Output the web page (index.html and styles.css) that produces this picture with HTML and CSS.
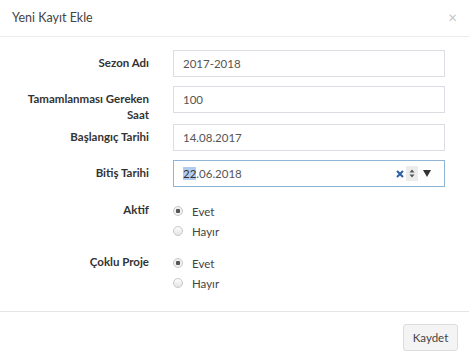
FILE: index.html
```html
<!DOCTYPE html>
<html lang="tr">
<head>
  <meta charset="UTF-8">
  <title>Yeni Kayıt Ekle</title>
  <link rel="stylesheet" href="styles.css">
</head>
<body>
  <div class="modal">
    <div class="modal-header">
      <h4 class="modal-title">Yeni Kayıt Ekle</h4>
      <span class="close">&times;</span>
    </div>

    <div class="modal-body">
      <div class="form-row">
        <label class="control-label">Sezon Adı</label>
        <div class="form-control">2017-2018</div>
      </div>
      <div class="form-row tight">
        <label class="control-label">Tamamlanması Gereken Saat</label>
        <div class="form-control">100</div>
      </div>
      <div class="form-row">
        <label class="control-label">Başlangıç Tarihi</label>
        <div class="form-control">14.08.2017</div>
      </div>
      <div class="form-row">
        <label class="control-label">Bitiş Tarihi</label>
        <div class="form-control focus">
          <span class="date-text"><span class="sel">22</span>.06.2018</span>
          <svg class="date-clear" width="8" height="8" viewBox="0 0 8 8">
            <path d="M1 1L7 7M7 1L1 7" stroke="#2c5ea8" stroke-width="2"/>
          </svg>
          <svg class="date-spin" width="12" height="15" viewBox="0 0 12 15">
            <rect width="12" height="15" fill="#ececec"/>
            <path d="M3.5 6.5L6 3.5L8.5 6.5Z M3.5 8.5L6 11.5L8.5 8.5Z" fill="#555"/>
          </svg>
          <svg class="date-drop" width="8" height="7" viewBox="0 0 8 7">
            <path d="M0 0H8L4 7Z" fill="#333"/>
          </svg>
        </div>
      </div>

      <div class="form-row radios first">
        <label class="control-label">Aktif</label>
        <div class="radio-group">
          <label class="radio"><input type="radio" name="aktif" checked> Evet</label>
          <label class="radio"><input type="radio" name="aktif"> Hayır</label>
        </div>
      </div>
      <div class="form-row radios">
        <label class="control-label">Çoklu Proje</label>
        <div class="radio-group">
          <label class="radio"><input type="radio" name="coklu" checked> Evet</label>
          <label class="radio"><input type="radio" name="coklu"> Hayır</label>
        </div>
      </div>
    </div>

    <div class="modal-footer">
      <button type="button" class="btn">Kaydet</button>
    </div>
  </div>
</body>
</html>
```

FILE: styles.css
```css
body {
  font-family: Lato, "Liberation Sans", sans-serif;
  margin: 0;
  padding: 0;
  background: #fff;
  color: #333;
}

.modal {
  width: 469px;
}

/* baslik */
.modal-header {
  height: 37px;
  border-bottom: 1px solid #ececec;
  display: flex;
  align-items: center;
  justify-content: space-between;
  padding: 0 11px 2px 12px;
  box-sizing: border-box;
}
.modal-title {
  margin: 0;
  font-size: 12.5px;
  font-weight: normal;
  color: #444;
}
.close {
  font-size: 15px;
  color: #c4c4c4;
  margin-right: 1px;
}

.modal-body {
  padding: 13px 0 0 8px;
  height: 274px;
  box-sizing: border-box;
}

.form-row {
  display: grid;
  grid-template-columns: 141px 272px;
  column-gap: 24px;
  margin-bottom: 9px;
}
.form-row.tight .control-label {
  margin-bottom: -8px;
}
.control-label {
  text-align: right;
  font-weight: bold;
  font-size: 11.5px;
  line-height: 16px;
  padding-top: 5px;
  color: #333;
}

.form-control {
  height: 27px;
  box-sizing: border-box;
  border: 1px solid #dcdde2;
  padding: 0 9px;
  font-size: 11.5px;
  line-height: 25px;
  color: #555;
  display: flex;
  align-items: center;
}
.form-control.focus {
  border-color: #8fb5d6;
}
.date-text {
  flex: 1;
}
.sel {
  background: #b0cdf0;
  color: #333;
}
.date-clear {
  margin-right: 2px;
}
.date-spin {
  margin-right: 5px;
}
.date-drop {
  margin-right: 4px;
}

/* radio */
.form-row.radios {
  margin-top: 12px;
  margin-bottom: 0;
}
.form-row.radios.first {
  margin-top: 15px;
}
.radios .control-label {
  padding-top: 0;
}
.radio-group {
  display: flex;
  flex-direction: column;
}
.radio {
  display: flex;
  align-items: center;
  font-size: 11.5px;
  line-height: 20px;
  color: #444;
}
.radio input {
  appearance: none;
  width: 10px;
  height: 10px;
  margin: 0 9px 0 0;
  border: 1px solid #c8c8c8;
  border-radius: 50%;
  background: linear-gradient(#fdfdfd, #e4e4e4);
  position: relative;
  top: -1px;
  box-sizing: border-box;
}
.radio input:checked {
  background: radial-gradient(circle, #555 0 2px, #f0f0f0 2.5px);
}

.modal-footer {
  border-top: 1px solid #e4e4e4;
  padding: 12px 11px 0 0;
  display: flex;
  justify-content: flex-end;
}
.btn {
  width: 55px;
  height: 27px;
  border: 1px solid #ddd;
  border-radius: 3px;
  background: #f4f4f4;
  color: #444;
  font-family: inherit;
  font-size: 11.5px;
  padding: 0;
}
```
